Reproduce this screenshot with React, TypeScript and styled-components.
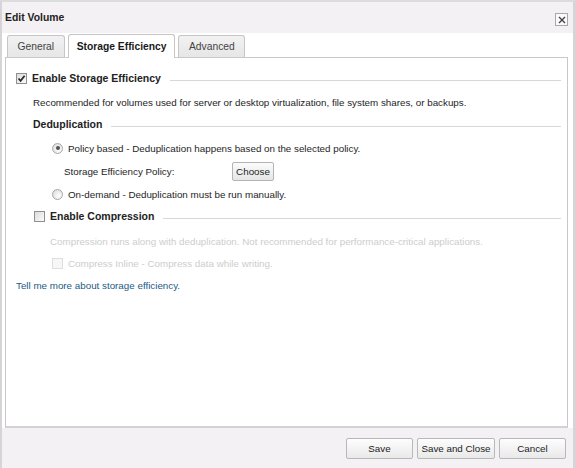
import * as React from 'react'
import styled, { createGlobalStyle } from 'styled-components'

const GlobalStyle = createGlobalStyle`
  html, body {
    margin: 0;
    padding: 0;
    background: #f4f1f4;
  }
  body {
    font-family: 'Liberation Sans', Arial, sans-serif;
    font-size: 9.8px;
    color: #1e1e1e;
  }
`

const Dialog = styled.div`
  width: 576px;
  height: 468px;
  box-sizing: border-box;
  display: flex;
  flex-direction: column;
  background: #f4f1f4;
  border-top: 2px solid #dcdcdc;
  border-left: 2px solid #d6d4d6;
  border-right: 3px solid #d6d4d6;
`

const TitleBar = styled.div`
  height: 31px;
  display: flex;
  align-items: center;
  justify-content: space-between;
  padding: 0 5px 0 3px;
`

const Title = styled.div`
  font-weight: bold;
  font-size: 10.4px;
  color: #222;
`

const CloseButton = styled.div`
  width: 11px;
  height: 11px;
  border: 1px solid #a8a8a8;
  background: #fafafa;
  display: flex;
  align-items: center;
  justify-content: center;
  margin-top: 4px;
`

const Body = styled.div`
  background: #fff;
  display: flex;
  flex-direction: column;
  padding: 0 5px 0 3px;
`

const TabStrip = styled.div`
  display: flex;
  align-items: flex-end;
  gap: 3px;
  height: 24px;
  padding-left: 2px;
`

const Tab = styled.div<{ $active?: boolean }>`
  box-sizing: border-box;
  height: ${p => (p.$active ? 24 : 22)}px;
  padding: 0 ${p => (p.$active ? 8 : 9.5)}px;
  display: flex;
  align-items: center;
  border: 1px solid #c6c6c6;
  border-bottom: none;
  border-radius: 3px 3px 0 0;
  font-size: 10.3px;
  font-weight: ${p => (p.$active ? 'bold' : 'normal')};
  color: ${p => (p.$active ? '#1a1a1a' : '#444')};
  background: ${p => (p.$active ? '#fff' : 'linear-gradient(#f2f2f2, #e6e6e6)')};
  margin-bottom: ${p => (p.$active ? -1 : 0)}px;
  position: relative;
`

const Panel = styled.div`
  height: 371px;
  box-sizing: border-box;
  border: 1px solid #c9c9c9;
  border-bottom: 2px solid #d2d2d2;
  padding: 9px 6px 0 10px;
  display: flex;
  flex-direction: column;
`

const SectionHead = styled.div<{ $indent?: number }>`
  display: flex;
  align-items: center;
  height: 22px;
  margin-left: ${p => p.$indent || 0}px;
  font-weight: bold;
  font-size: 10.5px;
  color: #222;
  &::after {
    content: '';
    flex: 1;
    height: 1px;
    background: #d8d8d8;
    margin-left: 9px;
    margin-top: 4px;
  }
`

const Row = styled.div<{ $indent?: number; $disabled?: boolean; $top?: number }>`
  display: flex;
  align-items: center;
  height: 22px;
  margin-left: ${p => p.$indent || 0}px;
  margin-top: ${p => p.$top || 0}px;
  color: ${p => (p.$disabled ? '#cdcdcd' : '#1e1e1e')};
`

const Box = styled.span<{ $disabled?: boolean }>`
  box-sizing: border-box;
  width: 11px;
  height: 11px;
  margin-right: 5px;
  border: 1px solid ${p => (p.$disabled ? '#dedede' : '#8f8f8f')};
  background: ${p => (p.$disabled ? '#f7f7f7' : 'linear-gradient(135deg, #dcdcdc, #fbfbfb)')};
  display: inline-flex;
  align-items: center;
  justify-content: center;
`

const Radio = styled.span<{ $on?: boolean }>`
  box-sizing: border-box;
  width: 11px;
  height: 11px;
  margin-right: 5px;
  border-radius: 50%;
  border: 1px solid #a6a6a6;
  background: radial-gradient(circle at 65% 65%, #ffffff, #d6d6d6);
  display: inline-flex;
  align-items: center;
  justify-content: center;
  &::after {
    content: '';
    display: ${p => (p.$on ? 'block' : 'none')};
    width: 4px;
    height: 4px;
    border-radius: 50%;
    background: #505050;
  }
`

const PolicyLabel = styled.span`
  width: 168px;
`

const SmallButton = styled.button`
  font-family: inherit;
  font-size: 9.8px;
  color: #222;
  height: 19px;
  width: 42px;
  padding: 0;
  border: 1px solid #b4b4b4;
  border-radius: 2px;
  background: linear-gradient(#fbfbfb, #e6e6e6);
`

const HelpLink = styled.a`
  color: #1c5b86;
  text-decoration: none;
`

const Footer = styled.div`
  flex: 1;
  display: flex;
  justify-content: flex-end;
  align-items: center;
  gap: 4px;
  padding: 1px 7px 0 0;
`

const FooterButton = styled.button<{ $w: number }>`
  width: ${p => p.$w}px;
  height: 21px;
  padding: 0;
  white-space: nowrap;
  font-family: inherit;
  font-size: 9.8px;
  color: #222;
  border: 1px solid #b8b8b8;
  border-radius: 2px;
  background: linear-gradient(#fdfdfd, #e9e9e9);
`

const Check = () => (
  <svg width="9" height="9" viewBox="0 0 9 9">
    <path d="M1.5 4.5 L3.6 6.8 L7.6 1.8" fill="none" stroke="#2b2b2b" strokeWidth="1.8" />
  </svg>
)

export default function App() {
  return (
    <>
      <GlobalStyle />
      <Dialog>
        <TitleBar>
          <Title>Edit Volume</Title>
          <CloseButton>
            <svg width="8" height="8" viewBox="0 0 8 8">
              <path d="M1 1 L7 7 M7 1 L1 7" stroke="#444" strokeWidth="1.4" />
            </svg>
          </CloseButton>
        </TitleBar>
        <Body>
          <TabStrip>
            <Tab>General</Tab>
            <Tab $active>Storage Efficiency</Tab>
            <Tab>Advanced</Tab>
          </TabStrip>
          <Panel>
            <SectionHead>
              <Box>
                <Check />
              </Box>
              Enable Storage Efficiency
            </SectionHead>
            <Row $indent={17} $top={2}>
              Recommended for volumes used for server or desktop virtualization, file system shares, or backups.
            </Row>
            <SectionHead $indent={17}>Deduplication</SectionHead>
            <Row $indent={36} $top={2}>
              <Radio $on />
              Policy based - Deduplication happens based on the selected policy.
            </Row>
            <Row $indent={48} $top={1}>
              <PolicyLabel>Storage Efficiency Policy:</PolicyLabel>
              <SmallButton>Choose</SmallButton>
            </Row>
            <Row $indent={36} $top={1}>
              <Radio />
              On-demand - Deduplication must be run manually.
            </Row>
            <SectionHead $indent={18}>
              <Box />
              Enable Compression
            </SectionHead>
            <Row $indent={34} $disabled $top={3}>
              Compression runs along with deduplication. Not recommended for performance-critical applications.
            </Row>
            <Row $indent={36} $disabled>
              <Box $disabled />
              Compress Inline - Compress data while writing.
            </Row>
            <Row>
              <HelpLink href="#">Tell me more about storage efficiency.</HelpLink>
            </Row>
          </Panel>
        </Body>
        <Footer>
          <FooterButton $w={67}>Save</FooterButton>
          <FooterButton $w={78}>Save and Close</FooterButton>
          <FooterButton $w={67}>Cancel</FooterButton>
        </Footer>
      </Dialog>
    </>
  )
}
